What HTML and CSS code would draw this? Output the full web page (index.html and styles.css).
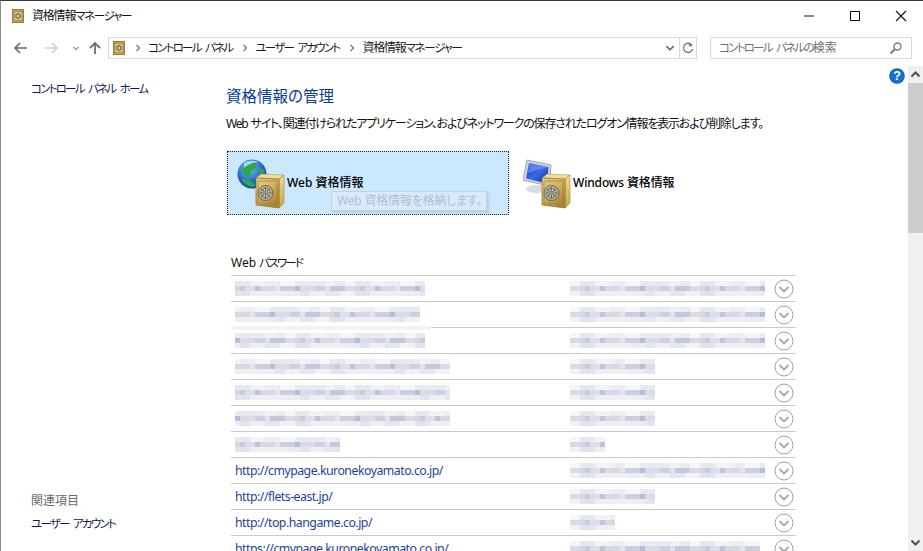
FILE: index.html
```html
<!DOCTYPE html>
<html lang="ja">
<head>
<meta charset="utf-8">
<title>資格情報マネージャー</title>
<link rel="stylesheet" href="styles.css">
</head>
<body>
<svg class="defs" width="0" height="0" aria-hidden="true">
  <defs>
    <linearGradient id="gold" x1="0" y1="0" x2=".6" y2="1"><stop offset="0" stop-color="#e9d18a"/><stop offset=".5" stop-color="#d4b25c"/><stop offset="1" stop-color="#a98632"/></linearGradient>
    <linearGradient id="side" x1="0" y1="0" x2="0" y2="1"><stop offset="0" stop-color="#f0da90"/><stop offset="1" stop-color="#c9a64c"/></linearGradient>
    <radialGradient id="sea" cx=".4" cy=".3" r=".8"><stop offset="0" stop-color="#7cc8f0"/><stop offset=".6" stop-color="#1c62c8"/><stop offset="1" stop-color="#123a90"/></radialGradient>
    <linearGradient id="scr" x1="0" y1="0" x2="1" y2="1"><stop offset="0" stop-color="#1030c0"/><stop offset=".5" stop-color="#3a6ae8"/><stop offset="1" stop-color="#0e2aa0"/></linearGradient>
    <symbol id="safe" viewBox="0 0 30 36">
      <path d="M1 5 L6 1 L29 2 L24 6Z" fill="#f0dd9c" stroke="#a8893e" stroke-width=".5"/>
      <path d="M24 6 L29 2 L29 30 L24 35Z" fill="url(#side)" stroke="#94762f" stroke-width=".5"/>
      <path d="M1 5 L24 6 L24 35 L1 32Z" fill="url(#gold)" stroke="#8f7230" stroke-width=".7"/>
      <rect x="3" y="8" width="19" height="23" fill="none" stroke="#9d7f36" stroke-width=".7"/>
      <circle cx="10.500" cy="20" r="7.500" fill="#b4af9c" stroke="#6d6855"/>
      <circle cx="10.500" cy="20" r="4.600" fill="#dcd9cc" stroke="#7b7663"/>
      <path d="M10.500 14V26M4.500 20H16.500M6.500 16L14.500 24M14.500 16L6.500 24" stroke="#6a6653" stroke-width="1.100"/>
      <circle cx="10.500" cy="20" r="2" fill="#97927f"/>
    </symbol>
    <symbol id="mini" viewBox="0 0 12 14">
      <rect x=".5" y=".5" width="11" height="13" fill="#c5a253" stroke="#9a7c34"/>
      <rect x="2" y="2.500" width="8" height="9" fill="#dcc98a" stroke="#8f7434" stroke-width=".6"/>
      <circle cx="6" cy="7" r="2.400" fill="#a9a594" stroke="#55513f" stroke-width=".8"/>
      <circle cx="6" cy="7" r=".8" fill="#f0eee4"/>
    </symbol>
    <symbol id="chev" viewBox="0 0 20 20">
      <circle cx="10" cy="10" r="9" fill="#fff" stroke="#a0a0a0" stroke-width="1"/>
      <path d="M5.500 8 L10 12.500 L14.500 8" fill="none" stroke="#a6a6a6" stroke-width="1.800"/>
    </symbol>
    <symbol id="crumb" viewBox="0 0 6 8">
      <path d="M1.500 1 L4.500 4 L1.500 7" fill="none" stroke="#7d7d7d" stroke-width="1.400"/>
    </symbol>
  </defs>
</svg>

<div class="window">
  <header class="titlebar">
    <svg class="mini-icon"><use href="#mini"/></svg>
    <span class="title">資格情報<span class="k">マネージャー</span></span>
    <div class="controls">
      <svg class="ctl" viewBox="0 0 46 30"><path d="M19 15H29" stroke="#111" stroke-width="1"/></svg>
      <svg class="ctl" viewBox="0 0 46 30"><rect x="19.500" y="10.500" width="9" height="9" fill="none" stroke="#111"/></svg>
      <svg class="ctl" viewBox="0 0 46 30"><path d="M19 10 L29 20 M29 10 L19 20" stroke="#111" stroke-width="1.100"/></svg>
    </div>
  </header>

  <nav class="navbar">
    <div class="nav-buttons">
      <svg class="nav-btn" viewBox="0 0 30 22"><path d="M3 11H15M8 6L3 11L8 16" fill="none" stroke="#6d6d6d" stroke-width="1.700"/></svg>
      <svg class="nav-btn" viewBox="0 0 30 22"><path d="M3 11H15M10 6L15 11L10 16" fill="none" stroke="#cfcfcf" stroke-width="1.700"/></svg>
      <svg class="nav-small" viewBox="0 0 10 22"><path d="M2.500 10L5 12.500L7.500 10" fill="none" stroke="#9a9a9a" stroke-width="1.300"/></svg>
      <svg class="nav-up" viewBox="0 0 14 22"><path d="M7 17V6M2 11L7 6L12 11" fill="none" stroke="#6d6d6d" stroke-width="1.800"/></svg>
    </div>
    <div class="address">
      <svg class="mini-icon addr-icon"><use href="#mini"/></svg>
      <svg class="crumb"><use href="#crumb"/></svg><span class="crumb-text k">コントロール パネル</span>
      <svg class="crumb"><use href="#crumb"/></svg><span class="crumb-text k">ユーザー アカウント</span>
      <svg class="crumb"><use href="#crumb"/></svg><span class="crumb-text crumb-last">資格情報<span class="k">マネージャー</span></span>
      <span class="spacer"></span>
      <svg class="addr-drop" viewBox="0 0 14 22"><path d="M3 9L7 13L11 9" fill="none" stroke="#6e6e6e" stroke-width="1.800"/></svg>
      <svg class="addr-refresh" viewBox="0 0 18 22"><path d="M13.500 8A5.200 5.200 0 1 0 14.200 12" fill="none" stroke="#7a7a7a" stroke-width="1.500"/><path d="M10 4.500V9H14.500Z" fill="#7a7a7a"/></svg>
    </div>
    <div class="search">
      <span class="search-text"><span class="k">コントロール パネルの</span>検索</span>
      <svg class="search-icon" viewBox="0 0 14 14"><circle cx="8.500" cy="5.500" r="3.500" fill="none" stroke="#7a7a7a" stroke-width="1.400"/><path d="M6 8L1.500 12.500" stroke="#7a7a7a" stroke-width="2"/></svg>
    </div>
  </nav>

  <div class="content">
    <aside class="sidebar">
      <a class="side-link k">コントロール パネル ホーム</a>
      <div class="related">
        <div class="related-head">関連項目</div>
        <a class="side-link k">ユーザー アカウント</a>
      </div>
    </aside>

    <main class="main">
      <h1 class="heading">資格情報の管理</h1>
      <p class="intro">Web サイト、関連付けられたアプリケーション、およびネットワークの保存されたログオン情報を表示および削除します。</p>

      <div class="tiles">
        <div class="tile tile-active">
          <svg class="tile-icon" viewBox="0 0 48 50">
            <circle cx="15" cy="15" r="14.500" fill="url(#sea)"/>
            <path d="M5 9 Q10 3 18 4 Q22 8 16 11 Q12 13 15 17 Q10 18 7 15Z M4 20 Q10 19 15 23 Q20 26 17 28 Q9 28 4 20Z M21 9 Q26 9 28 13 Q26 16 23 14Z" fill="#2fa84a"/>
            <path d="M7 4 Q14 0 22 3 Q14 3 7 9Z" fill="#bfe6f8" opacity=".8"/>
            <use href="#safe" x="18" y="14" width="30" height="36"/>
          </svg>
          <span class="tile-label">Web 資格情報</span>
          <div class="tooltip">Web 資格情報を格納します。</div>
        </div>
        <div class="tile tile-plain">
          <svg class="tile-icon" viewBox="0 0 48 50">
            <path d="M4 1 L28 6 L26 27 L0 21Z" fill="#cfd6df" stroke="#98a2ae"/>
            <path d="M6 4 L25.500 8 L24 24.500 L3 19.500Z" fill="url(#scr)"/>
            <path d="M6 4 L25.500 8 L14 11 L5 14Z" fill="#7ea4f0" opacity=".6"/>
            <ellipse cx="13" cy="30" rx="10" ry="4" fill="#d9dde2"/>
            <use href="#safe" x="18" y="14" width="30" height="36"/>
          </svg>
          <span class="tile-label tile-label-win">Windows 資格情報</span>
        </div>
      </div>

      <h2 class="section">Web <span class="k">パスワード</span></h2>
      <div class="list">
        <div class="row"><span class="cell"><i class="smear w190"></i></span><span class="cell"><i class="smear w195"></i></span><svg class="chev"><use href="#chev"/></svg></div>
        <div class="row"><span class="cell"><i class="smear w185"></i></span><span class="cell"><i class="smear w195"></i></span><svg class="chev"><use href="#chev"/></svg></div>
        <div class="row veil"><span class="cell"><i class="smear w190"></i></span><span class="cell"><i class="smear w195"></i></span><svg class="chev"><use href="#chev"/></svg></div>
        <div class="row"><span class="cell"><i class="smear w215"></i></span><span class="cell"><i class="smear w85"></i></span><svg class="chev"><use href="#chev"/></svg></div>
        <div class="row"><span class="cell"><i class="smear w215"></i></span><span class="cell"><i class="smear w85"></i></span><svg class="chev"><use href="#chev"/></svg></div>
        <div class="row"><span class="cell"><i class="smear w215"></i></span><span class="cell"><i class="smear w85"></i></span><svg class="chev"><use href="#chev"/></svg></div>
        <div class="row"><span class="cell"><i class="smear w105"></i></span><span class="cell"><i class="smear w35"></i></span><svg class="chev"><use href="#chev"/></svg></div>
        <div class="row"><a class="cell url">http://cmypage.kuronekoyamato.co.jp/</a><span class="cell"><i class="smear w195"></i></span><svg class="chev"><use href="#chev"/></svg></div>
        <div class="row"><a class="cell url">http://flets-east.jp/</a><span class="cell"><i class="smear w85"></i></span><svg class="chev"><use href="#chev"/></svg></div>
        <div class="row"><a class="cell url">http://top.hangame.co.jp/</a><span class="cell"><i class="smear w45"></i></span><svg class="chev"><use href="#chev"/></svg></div>
        <div class="row"><a class="cell url">https://cmypage.kuronekoyamato.co.jp/</a><span class="cell"><i class="smear w190"></i></span><svg class="chev"><use href="#chev"/></svg></div>
      </div>
    </main>

    <svg class="help" viewBox="0 0 16 16"><circle cx="8" cy="8" r="7.800" fill="#0a63b8"/><circle cx="8" cy="8" r="6.800" fill="#1572c9"/><text class="help-mark" x="8" y="12.300" text-anchor="middle">?</text></svg>

    <div class="scrollbar">
      <svg class="sb-btn" viewBox="0 0 15 17"><path d="M3.500 10.500L7.500 6.500L11.500 10.500" fill="none" stroke="#505050" stroke-width="2"/></svg>
      <div class="sb-thumb"></div>
      <div class="sb-track"></div>
      <svg class="sb-btn" viewBox="0 0 15 17"><path d="M3.500 6.500L7.500 10.500L11.500 6.500" fill="none" stroke="#505050" stroke-width="2"/></svg>
    </div>
  </div>
</div>
</body>
</html>
```

FILE: styles.css
```css
* { box-sizing: border-box; }
html, body { margin: 0; height: 100%; overflow: hidden; background: #fff; }
body {
  font-family: "Noto Sans", "Noto Sans CJK JP", sans-serif;
  font-size: 12px;
  color: #000;
  font-feature-settings: "palt";
}
.defs { position: absolute; }
.k { font-size: 11.500px; letter-spacing: -1.750px; word-spacing: 3px; }
.window {
  width: 923px;
  height: 551px;
  display: flex;
  flex-direction: column;
  border-top: 1px solid #3a3a32;
  border-left: 1px solid #8a8a8a;
  overflow: hidden;
}

/* title bar */
.titlebar { height: 30px; display: flex; align-items: center; padding-left: 11px; flex: none; }
.mini-icon { width: 12px; height: 14px; flex: none; }
.title { margin-left: 8px; line-height: 1; color: #111; letter-spacing: -1.200px; }
.title .k { letter-spacing: -1.300px; }
.controls { margin-left: auto; display: flex; }
.ctl { width: 46px; height: 30px; display: block; }

/* nav */
.navbar { height: 35px; display: flex; align-items: flex-start; padding-top: 6px; flex: none; }
.nav-buttons { width: 107px; height: 22px; display: flex; padding-left: 11px; align-items: center; flex: none; }
.nav-btn { width: 30px; height: 22px; flex: none; }
.nav-small { width: 10px; height: 22px; flex: none; margin-left: -1px; }
.nav-up { width: 14px; height: 22px; flex: none; margin-left: 7px; }
.address {
  width: 589px;
  height: 22px;
  border: 1px solid #d9d9d9;
  display: flex;
  align-items: center;
  padding-left: 4px;
  flex: none;
}
.crumb { width: 6px; height: 8px; flex: none; margin: 0 7px 0 10px; }
.crumb-text { color: #1a1a1a; line-height: 1; }
.crumb-last { letter-spacing: -1.200px; }
.crumb-last .k { letter-spacing: -1.300px; }
.spacer { flex: 1; }
.addr-drop { width: 14px; height: 20px; flex: none; margin-right: 2px; }
.addr-refresh { width: 17px; height: 20px; flex: none; border-left: 1px solid #d9d9d9; }
.search {
  width: 202px;
  height: 22px;
  margin-left: 13px;
  border: 1px solid #d9d9d9;
  display: flex;
  align-items: center;
  justify-content: space-between;
  padding: 0 8px;
  flex: none;
}
.search-text { color: #6f6f6f; line-height: 1; }
.search-icon { width: 14px; height: 14px; flex: none; }

/* content */
.content { flex: 1; display: flex; position: relative; min-height: 0; }
.sidebar {
  width: 225px;
  flex: none;
  padding: 15px 0 19px 30px;
  display: flex;
  flex-direction: column;
  justify-content: space-between;
}
.side-link { color: #101a50; line-height: 16px; display: block; }
.related-head { color: #6b6b6b; line-height: 16px; margin-bottom: 7px; }
.main { flex: none; width: 682px; overflow: hidden; }
.heading { margin: 21px 0 0; font-size: 15.500px; font-weight: 400; color: #0a3c9c; line-height: 18px; }
.intro { margin: 11px 0 0; line-height: 16px; font-size: 12px; color: #111; white-space: nowrap; letter-spacing: -1.160px; word-spacing: 1px; }

.tiles { display: flex; margin: 19px 0 0 1px; }
.tile { height: 64px; display: flex; align-items: center; position: relative; flex: none; }
.tile-active { width: 282px; padding-left: 9px; background: #cce8ff; border: 1px dotted #222; }
.tile-plain { padding-left: 14px; }
.tile-icon { width: 48px; height: 50px; flex: none; margin-top: 2px; }
.tile-label { margin-left: 2px; font-weight: 500; color: #000; line-height: 1; }
.tile-label-win { letter-spacing: -.150px; }
.tooltip {
  position: absolute;
  left: 103px;
  top: 39px;
  width: 156px;
  height: 20px;
  background: #dbeafa;
  border: 1px solid #bcd2e6;
  box-shadow: 2px 2px 2px #bcd0e4;
  color: #aebfd2;
  line-height: 18px;
  padding-left: 5px;
  white-space: nowrap;
  letter-spacing: -.200px;
}

.section { margin: 40px 0 0 5px; font-size: 12px; font-weight: 400; line-height: 16px; height: 20px; color: #111; }
.list { margin-left: 5px; width: 565px; }
.row {
  height: 26px;
  border-top: 1px solid #c9c9c9;
  display: grid;
  grid-template-columns: 335px 1fr 19px;
  align-items: center;
  padding: 0 2px 0 4px;
  position: relative;
  --o: 0px;
}
.row:nth-child(2n) { --o: -25px; }
.row:nth-child(3n) { --o: -60px; }
.veil::before {
  content: "";
  position: absolute;
  left: 0;
  top: -2px;
  width: 200px;
  height: 4px;
  background: #f3f3f3;
}
.cell { display: block; white-space: nowrap; overflow: hidden; line-height: 24px; }
.cell + .cell { --o: -110px; }
.url { color: #1c3f9f; font-size: 12.300px; letter-spacing: -.500px; }
.chev { width: 20px; height: 20px; display: block; margin-left: -1px; }

/* obscured text: three bands of 5px mosaic blocks */
.smear {
  display: block;
  height: 15px;
  background-repeat: repeat-x;
  background-size: 120px 5px;
  background-position: calc(var(--o) - 30px) 0, var(--o) 5px, calc(var(--o) - 70px) 10px;
  background-image:
    repeating-linear-gradient(90deg, #f0f1f6 0 10px, #e9ebf2 10px 20px, #f4f6f9 20px 30px, #e6e8f0 30px 45px, #f1f3f7 45px 60px, #ebedf3 60px 75px, #f5f6fa 75px 90px, #e8eaf1 90px 120px),
    repeating-linear-gradient(90deg, #d4d6e3 0 5px, #c8cbdc 5px 10px, #dcdeea 10px 20px, #bfc4da 20px 25px, #d6d8e4 25px 40px, #e2e5ee 40px 45px, #cccfdf 45px 60px, #b7bdd6 60px 65px, #d9dbe7 65px 80px, #cdd0e0 80px 90px, #e0e2ec 90px 95px, #c5c8da 95px 110px, #d8dae6 110px 120px),
    repeating-linear-gradient(90deg, #ebedf3 0 15px, #e3e5ee 15px 25px, #eef0f5 25px 40px, #e5e7ef 40px 55px, #f0f2f6 55px 70px, #e1e4ed 70px 85px, #edeff4 85px 120px);
}
.w190 { width: 190px; }
.w195 { width: 195px; }
.w185 { width: 185px; }
.w215 { width: 215px; }
.w105 { width: 105px; }
.w85 { width: 85px; }
.w45 { width: 45px; }
.w35 { width: 35px; }

.help { position: absolute; left: 888px; top: 2px; width: 16px; height: 16px; }
.help-mark { font-family: "Liberation Sans", sans-serif; font-weight: 700; font-size: 12.500px; fill: #fff; }

.scrollbar { width: 15px; margin-left: auto; flex: none; background: #f0f0f0; display: flex; flex-direction: column; }
.sb-btn { width: 15px; height: 17px; flex: none; display: block; }
.sb-thumb { height: 150px; background: #cdcdcd; flex: none; }
.sb-track { flex: 1; }
```
